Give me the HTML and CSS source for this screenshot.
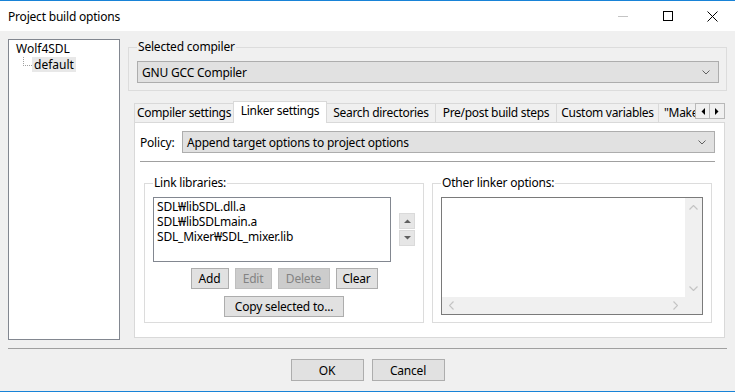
FILE: index.html
```html
<!DOCTYPE html>
<html lang="en">
<head>
    <meta charset="UTF-8">
    <title>Project build options</title>
    <link rel="stylesheet" href="styles.css">
</head>
<body>

<div class="window">
    <div class="titlebar">
        <span class="title">Project build options</span>
        <div class="caption">
            <span class="cap-btn">
                <svg width="10" height="10" viewBox="0 0 10 10"><path d="M0 5.5h10" stroke="#c4c4c4" stroke-width="1"/></svg>
            </span>
            <span class="cap-btn">
                <svg width="10" height="10" viewBox="0 0 10 10"><rect x="0.5" y="0.5" width="9" height="9" fill="none" stroke="#000" stroke-width="1"/></svg>
            </span>
            <span class="cap-btn">
                <svg width="11" height="11" viewBox="0 0 11 11"><path d="M0.5 0.5l10 10M10.5 0.5l-10 10" stroke="#000" stroke-width="1"/></svg>
            </span>
        </div>
    </div>

    <div class="content">
        <div class="main">
            <div class="tree">
                <div class="node-root">Wolf4SDL</div>
                <div class="node-child">
                    <span class="connector"></span>
                    <span class="node-label">default</span>
                </div>
            </div>

            <div class="right">
                <fieldset class="group compiler-group">
                    <legend>Selected compiler</legend>
                    <div class="combo">
                        <span>GNU GCC Compiler</span>
                        <svg width="8" height="5" viewBox="0 0 8 5"><path d="M0.5 0.5l3.5 3.5 3.5-3.5" fill="none" stroke="#606060" stroke-width="1"/></svg>
                    </div>
                </fieldset>

                <div class="notebook">
                    <div class="tabs">
                        <div class="tab tab-compiler">Compiler settings</div>
                        <div class="tab tab-linker active">Linker settings</div>
                        <div class="tab tab-search">Search directories</div>
                        <div class="tab tab-prepost">Pre/post build steps</div>
                        <div class="tab tab-custom">Custom variables</div>
                        <div class="tab tab-make">"Make" commands</div>
                        <div class="tab-scroll">
                            <span class="scroll-btn">
                                <svg width="4" height="7" viewBox="0 0 4 7"><path d="M4 0v7L0.5 3.5z" fill="#000"/></svg>
                            </span>
                            <span class="scroll-btn">
                                <svg width="4" height="7" viewBox="0 0 4 7"><path d="M0 0v7l3.5-3.5z" fill="#000"/></svg>
                            </span>
                        </div>
                    </div>

                    <div class="panel">
                        <div class="policy-row">
                            <span class="policy-label">Policy:</span>
                            <div class="combo">
                                <span>Append target options to project options</span>
                                <svg width="8" height="5" viewBox="0 0 8 5"><path d="M0.5 0.5l3.5 3.5 3.5-3.5" fill="none" stroke="#606060" stroke-width="1"/></svg>
                            </div>
                        </div>
                        <div class="hline"></div>

                        <div class="groups">
                            <fieldset class="group libs">
                                <legend>Link libraries:</legend>
                                <div class="libs-row">
                                    <div class="listbox">
                                        <div>SDL₩libSDL.dll.a</div>
                                        <div>SDL₩libSDLmain.a</div>
                                        <div>SDL_Mixer₩SDL_mixer.lib</div>
                                    </div>
                                    <div class="updown">
                                        <span class="ud-btn">
                                            <svg width="7" height="4" viewBox="0 0 7 4"><path d="M0 4h7L3.5 0.5z" fill="#606060"/></svg>
                                        </span>
                                        <span class="ud-btn">
                                            <svg width="7" height="4" viewBox="0 0 7 4"><path d="M0 0h7L3.5 3.5z" fill="#606060"/></svg>
                                        </span>
                                    </div>
                                </div>
                                <div class="btn-row">
                                    <button class="btn w-add">Add</button>
                                    <button class="btn w-edit" disabled>Edit</button>
                                    <button class="btn w-delete" disabled>Delete</button>
                                    <button class="btn w-clear">Clear</button>
                                </div>
                                <div class="btn-row copy-row">
                                    <button class="btn w-copy">Copy selected to...</button>
                                </div>
                            </fieldset>

                            <fieldset class="group other">
                                <legend>Other linker options:</legend>
                                <div class="memo">
                                    <div class="memo-text"></div>
                                    <div class="vscroll">
                                        <svg width="9" height="5" viewBox="0 0 9 5"><path d="M0.5 4.5l4-4 4 4" fill="none" stroke="#c4c4c4" stroke-width="1.2"/></svg>
                                        <svg width="9" height="5" viewBox="0 0 9 5"><path d="M0.5 0.5l4 4 4-4" fill="none" stroke="#c4c4c4" stroke-width="1.2"/></svg>
                                    </div>
                                    <div class="hscroll">
                                        <svg width="5" height="9" viewBox="0 0 5 9"><path d="M4.5 0.5l-4 4 4 4" fill="none" stroke="#c4c4c4" stroke-width="1.2"/></svg>
                                        <svg width="5" height="9" viewBox="0 0 5 9"><path d="M0.5 0.5l4 4-4 4" fill="none" stroke="#c4c4c4" stroke-width="1.2"/></svg>
                                    </div>
                                    <div class="corner"></div>
                                </div>
                            </fieldset>
                        </div>
                    </div>
                </div>
            </div>
        </div>

        <div class="footer">
            <button class="btn dlg-btn">OK</button>
            <button class="btn dlg-btn">Cancel</button>
        </div>
    </div>
</div>

</body>
</html>
```

FILE: styles.css
```css
body {
    margin: 0;
    font-family: "Noto Sans", "Liberation Sans", sans-serif;
    font-size: 12px;
    color: #000;
    background: #f0f0f0;
}
.window {
    width: 735px;
    height: 392px;
    box-sizing: border-box;
    border-top: 1px solid #1883d7;
    border-bottom: 1px solid #1883d7;
    background: #f0f0f0;
    overflow: hidden;
}
.titlebar {
    height: 30px;
    background: #fff;
    display: flex;
    align-items: center;
    justify-content: space-between;
    padding-left: 8px;
}
.title { letter-spacing: -0.2px; }
.caption { display: flex; height: 30px; }
.cap-btn {
    width: 45px;
    display: flex;
    align-items: center;
    justify-content: center;
}

.content { padding: 8px 8px 0; }
.main { display: flex; gap: 8px; }

.tree {
    width: 112px;
    height: 301px;
    box-sizing: border-box;
    border: 1px solid #828790;
    background: #fff;
    padding-top: 1px;
    line-height: 16px;
}
.node-root { padding-left: 7px; }
.node-child {
    display: flex;
    align-items: flex-start;
    margin-left: 14px;
}
.connector {
    width: 8px;
    height: 8px;
    border-left: 1px dotted #a0a0a0;
    border-bottom: 1px dotted #a0a0a0;
}
.node-label {
    background: #e8e8e8;
    padding: 0 2px;
    line-height: 15px;
    margin-top: 0;
}

.right { flex: 1; min-width: 0; }

.group {
    margin: 0;
    min-width: 0;
    border: 1px solid #dcdcdc;
}
.group legend {
    padding: 0 1px;
    line-height: 16px;
    letter-spacing: -0.2px;
}
.compiler-group { padding: 0 7px 7px 8px; }
.compiler-group .combo { margin-top: 6px; }

.combo {
    height: 22px;
    box-sizing: border-box;
    border: 1px solid #adadad;
    background: #e1e1e1;
    display: flex;
    align-items: center;
    justify-content: space-between;
    padding: 0 8px 0 4px;
    letter-spacing: -0.2px;
}

.notebook { margin: 10px 2px 0 6px; }
.tabs {
    display: flex;
    align-items: flex-end;
    height: 21px;
}
.tab {
    height: 19px;
    box-sizing: border-box;
    border: 1px solid #d9d9d9;
    border-bottom: none;
    border-right: none;
    background: #f0f0f0;
    line-height: 18px;
    text-align: center;
    white-space: nowrap;
    overflow: hidden;
    letter-spacing: -0.3px;
}
.tab.active {
    height: 22px;
    margin-bottom: -1px;
    background: #fff;
    border-right: 1px solid #d9d9d9;
    position: relative;
    z-index: 1;
    line-height: 18px;
}
.tab-compiler { width: 99px; }
.tab-linker { width: 94px; }
.tab-search { width: 108px; border-left: none; }
.tab-prepost { width: 121px; }
.tab-custom { width: 102px; }
.tab-make { width: 37px; text-align: left; padding-left: 5px; }
.tab-scroll {
    display: flex;
    margin-left: 0;
    align-self: flex-start;
    margin-top: 2px;
}
.scroll-btn {
    width: 15px;
    height: 16px;
    box-sizing: border-box;
    border: 1px solid #b8b8b8;
    background: #f0f0f0;
    display: flex;
    align-items: center;
    justify-content: center;
}
.scroll-btn + .scroll-btn { border-left: none; }

.panel {
    border: 1px solid #d9d9d9;
    background: #fff;
    padding: 8px 9px 14px 5px;
}
.policy-row { display: flex; align-items: center; }
.policy-label { width: 42px; letter-spacing: -0.2px; }
.policy-row .combo { flex: 1; }
.hline {
    margin-top: 8px;
    border-top: 1px solid #a0a0a0;
}

.groups {
    display: flex;
    gap: 8px;
    margin: 13px 3px 0 4px;
}
.groups .group { flex: 1; }
.libs { padding: 0 8px 5px 8px; }
.other { padding: 0 8px 7px 8px; }

.libs-row {
    display: flex;
    align-items: center;
    gap: 8px;
    margin-top: 6px;
}
.listbox {
    flex: 1;
    height: 65px;
    box-sizing: border-box;
    border: 1px solid #828790;
    background: #fff;
    padding: 1px 3px;
    line-height: 15px;
    letter-spacing: -0.2px;
}
.updown { display: flex; flex-direction: column; gap: 1px; }
.ud-btn {
    width: 16px;
    height: 16px;
    box-sizing: border-box;
    border: 1px solid #dadada;
    background: #e6e6e6;
    display: flex;
    align-items: center;
    justify-content: center;
}

.btn-row {
    display: flex;
    justify-content: center;
    gap: 6px;
    margin-top: 6px;
}
.copy-row { margin-top: 7px; }
.btn {
    font: inherit;
    letter-spacing: -0.2px;
    height: 21px;
    padding: 0;
    border: 1px solid #adadad;
    background: #e1e1e1;
    color: #000;
}
.btn:disabled {
    background: #cccccc;
    border-color: #bfbfbf;
    color: #838383;
}
.w-add { width: 38px; }
.w-edit { width: 37px; }
.w-delete { width: 52px; }
.w-clear { width: 42px; }
.w-copy { width: 120px; }

.memo {
    margin-top: 6px;
    height: 118px;
    box-sizing: border-box;
    border: 1px solid #7a7a7a;
    background: #fff;
    display: grid;
    grid-template-columns: 1fr 17px;
    grid-template-rows: 1fr 17px;
}
.vscroll {
    background: #f0f0f0;
    display: flex;
    flex-direction: column;
    justify-content: space-between;
    align-items: center;
    padding: 7px 0 6px;
}
.hscroll {
    background: #f0f0f0;
    display: flex;
    justify-content: space-between;
    align-items: center;
    padding: 0 7px;
}
.corner { background: #f0f0f0; }

.footer {
    margin-top: 8px;
    border-top: 1px solid #a0a0a0;
    padding-top: 10px;
    display: flex;
    justify-content: center;
    gap: 8px;
}
.dlg-btn { width: 73px; height: 22px; }
```
